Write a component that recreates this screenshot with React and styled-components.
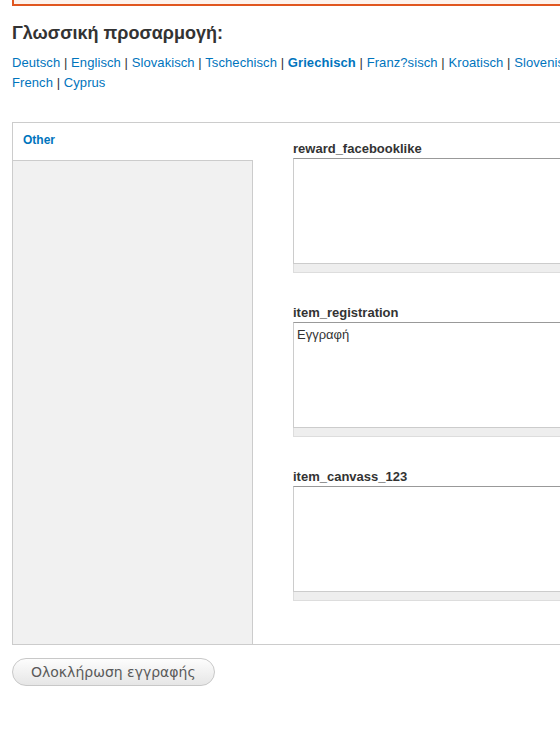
import React from "react";
import styled, { createGlobalStyle } from "styled-components";

const Global = createGlobalStyle`
  html, body { margin: 0; padding: 0; background: #fff; overflow: hidden; }
  body { font-family: "Liberation Sans", Arial, sans-serif; color: #333; }
`;

const Page = styled.div`
  width: 820px;
  padding: 0 0 40px 12px;
`;

const Notice = styled.div`
  height: 4px;
  background: #fdf2ec;
  border-left: 2px solid #e0561f;
  border-bottom: 2px solid #e0561f;
`;

const Heading = styled.h2`
  margin: 17px 0 0;
  font-size: 18px;
  line-height: 20px;
  font-weight: bold;
  color: #333;
`;

const LangList = styled.div`
  margin-top: 10px;
  width: 590px;
  font-size: 13px;
  line-height: 20px;
  letter-spacing: 0.08px;
  color: #333;
`;

const LangLink = styled.a`
  color: #0074bd;
  text-decoration: none;
  font-weight: ${(p) => (p.$active ? "bold" : "normal")};
`;

const Tabs = styled.div`
  margin-top: 29px;
  display: flex;
  border: 1px solid #ccc;
  background: #fff;
`;

const TabMenu = styled.div`
  width: 240px;
  flex: none;
  display: flex;
  flex-direction: column;
`;

const TabItem = styled.a`
  display: block;
  height: 37px;
  box-sizing: border-box;
  padding: 10px 10px 0;
  font-size: 12px;
  line-height: 15px;
  font-weight: bold;
  color: #0074bd;
  text-decoration: none;
`;

const TabFiller = styled.div`
  flex: 1;
  background: #f1f1f1;
  border-top: 1px solid #ccc;
  border-right: 1px solid #ccc;
`;

const TabPane = styled.div`
  flex: 1;
  padding: 18px 0 11px 40px;
`;

const Field = styled.div`
  margin-bottom: 32px;
`;

const Label = styled.label`
  display: block;
  font-size: 13px;
  line-height: 15px;
  font-weight: bold;
  color: #333;
  margin-bottom: 2px;
`;

const TextArea = styled.textarea`
  display: block;
  width: 100%;
  height: 106px;
  box-sizing: border-box;
  margin: 0;
  padding: 4px 3px;
  border: 1px solid #ccc;
  border-top-color: #999;
  font-family: "Liberation Sans", Arial, sans-serif;
  font-size: 13px;
  line-height: 16px;
  color: #333;
  resize: none;
  outline: none;
`;

const Grippie = styled.div`
  height: 9px;
  box-sizing: border-box;
  background: #eee;
  border: 1px solid #ddd;
  border-top: 0;
`;

const Actions = styled.div`
  margin-top: 13px;
`;

const Button = styled.button`
  height: 28px;
  padding: 0 18px;
  border: 1px solid #c8c8c8;
  border-radius: 14px;
  background: linear-gradient(#fdfdfd, #e6e6e6);
  font-family: "DejaVu Sans", Verdana, sans-serif;
  font-size: 14px;
  color: #5a5a5a;
  cursor: pointer;
`;

const langs = [
  { name: "Deutsch" },
  { name: "Englisch" },
  { name: "Slovakisch" },
  { name: "Tschechisch" },
  { name: "Griechisch", active: true },
  { name: "Franz?sisch" },
  { name: "Kroatisch" },
  { name: "Slovenisch" },
  { name: "French" },
  { name: "Cyprus" },
];

const fields = [
  { label: "reward_facebooklike", value: "" },
  { label: "item_registration", value: "Εγγραφή" },
  { label: "item_canvass_123", value: "" },
];

export default function App() {
  return (
    <>
      <Global />
      <Page>
        <Notice />
        <Heading>Γλωσσική προσαρμογή:</Heading>
        <LangList>
          {langs.map((l, i) => (
            <React.Fragment key={l.name}>
              <LangLink href="#" $active={l.active}>
                {l.name}
              </LangLink>
              {i < langs.length - 1 ? " | " : ""}
            </React.Fragment>
          ))}
        </LangList>
        <Tabs>
          <TabMenu>
            <TabItem href="#">Other</TabItem>
            <TabFiller />
          </TabMenu>
          <TabPane>
            {fields.map((f) => (
              <Field key={f.label}>
                <Label>{f.label}</Label>
                <TextArea defaultValue={f.value} />
                <Grippie />
              </Field>
            ))}
          </TabPane>
        </Tabs>
        <Actions>
          <Button>Ολοκλήρωση εγγραφής</Button>
        </Actions>
      </Page>
    </>
  );
}
